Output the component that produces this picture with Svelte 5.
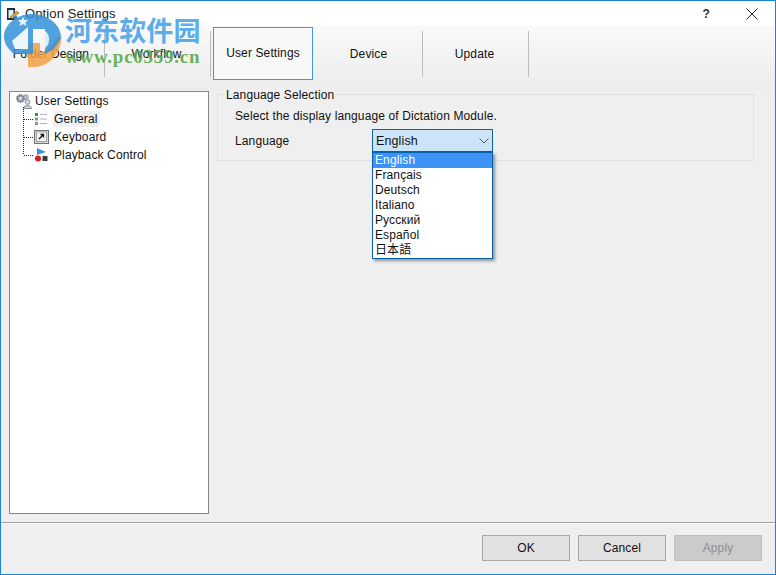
<script>
	const tabs = ['Folder Design', 'Workflow', 'User Settings', 'Device', 'Update'];
	const active = 'User Settings';
	const languages = ['English', 'Français', 'Deutsch', 'Italiano', 'Русский', 'Español', '日本語'];
</script>

<div class="window">
	<div class="titlebar">
		<svg class="app-icon" width="14" height="14" viewBox="0 0 14 14">
			<rect x="1" y="1" width="8" height="12" fill="#1d2f45" />
			<rect x="2.5" y="3" width="5" height="8" fill="#e4edf5" />
			<path d="M4 10 L11 4 L13 6 L6.5 11.5 Z" fill="#e0a030" stroke="#7a5a18" stroke-width="0.5" />
			<rect x="8" y="9" width="3" height="4" fill="#3c7fc0" />
		</svg>
		<span class="title">Option Settings</span>
		<span class="help">?</span>
		<svg class="close" width="12" height="12" viewBox="0 0 12 12">
			<path d="M0.5 0.5 L11.5 11.5 M11.5 0.5 L0.5 11.5" stroke="#222" stroke-width="1" fill="none" />
		</svg>
	</div>

	<nav class="tabbar">
		{#each tabs as tab}
			<div class="tab" class:active={tab === active}>{tab}</div>
		{/each}
	</nav>

	<main class="content">
		<aside class="tree">
			<div class="node root">
				<svg class="icon" width="18" height="16" viewBox="0 0 18 16">
					<circle cx="5.5" cy="5.5" r="3.6" fill="#9aa4ae" stroke="#6c7680" stroke-dasharray="1.6 0.8" stroke-width="1.6" />
					<circle cx="5.5" cy="5.5" r="1.2" fill="#eef0f2" />
					<circle cx="11" cy="4" r="2.4" fill="#b4bcc4" stroke="#7c868e" stroke-dasharray="1.2 0.7" />
					<circle cx="12.5" cy="9" r="2.4" fill="#d4d8de" stroke="#8a929a" />
					<path d="M8.5 15.5 C8.5 11.5 16.5 11.5 16.5 15.5 Z" fill="#c8ced6" stroke="#8a929a" />
				</svg>
				<span>User Settings</span>
			</div>
			<div class="children">
				<div class="node child">
					<svg class="icon" width="15" height="14" viewBox="0 0 15 14">
						<rect x="1" y="1" width="3" height="3" fill="#2aa02a" />
						<rect x="1" y="5.5" width="3" height="3" fill="#8e9296" />
						<rect x="1" y="10" width="3" height="3" fill="#8e9296" />
						<path d="M6 2.5 H13 M6 7 H13 M6 11.5 H13" stroke="#b0b4b8" stroke-width="1" />
					</svg>
					<span class="selected">General</span>
				</div>
				<div class="node child">
					<svg class="icon" width="15" height="14" viewBox="0 0 15 14">
						<rect x="0.5" y="0.5" width="14" height="13" fill="#d8d8d8" stroke="#6f7174" />
						<rect x="2.5" y="2" width="10" height="9.5" fill="#f4f4f4" stroke="#a0a0a0" />
						<path d="M5 9 L9.5 4.5 M6.5 4.5 H9.5 V7.5" stroke="#111" stroke-width="1.3" fill="none" />
					</svg>
					<span>Keyboard</span>
				</div>
				<div class="node child">
					<svg class="icon" width="15" height="14" viewBox="0 0 15 14">
						<path d="M3 0 L12 4 L3 7 Z" fill="#3c93e0" />
						<circle cx="4" cy="10.5" r="3" fill="#d81e1e" />
						<rect x="8.5" y="8" width="5" height="5" fill="#3a3a3a" />
					</svg>
					<span>Playback Control</span>
				</div>
			</div>
		</aside>

		<section class="group">
			<span class="legend">Language Selection</span>
			<p class="hint">Select the display language of Dictation Module.</p>
			<div class="field">
				<span class="field-label">Language</span>
				<div class="combo">
					<span>English</span>
					<svg width="10" height="6" viewBox="0 0 10 6">
						<path d="M0.5 0.5 L5 5 L9.5 0.5" stroke="#555" fill="none" />
					</svg>
					<ul class="dropdown">
						{#each languages as lang, i}
							<li class:highlight={i === 0}>{lang}</li>
						{/each}
					</ul>
				</div>
			</div>
		</section>
	</main>

	<footer class="footer">
		<button>OK</button>
		<button>Cancel</button>
		<button class="disabled" disabled>Apply</button>
	</footer>

	<!-- site watermark stamped over the screenshot -->
	<div class="watermark">
		<svg class="wm-logo" width="58" height="54" viewBox="0 0 58 54">
			<path d="M24 30 H36 V40 C42 38 48 33 52 24 L57.5 24 C57 40 46 53 31 54 H24 Z" fill="#f2a044" opacity="0.85" />
			<path d="M28 1 C44 1 57 12 57 24 C55 32 48 38 41 41 L41 16 L29 16 L29 41 L10 41 C4 36 0 30 0 24 C0 11 13 1 28 1 Z" fill="#3393da" opacity="0.85" />
			<path d="M8 28 L24 14 L24 36 L11 36 Z" fill="#fff" opacity="0.9" />
			<path d="M29 16 H34 C44 16 47 24 44 32 L41 35 V18 H29 Z" fill="#fff" opacity="0.8" />
			<path d="M19 4 L20.5 7 L24 7 L21.5 9.5 L22.5 13 L19 11 L15.5 13 L16.5 9.5 L14 7 L17.5 7 Z" fill="#e4f2fc" />
		</svg>
		<span class="wm-cn">河东软件园</span>
		<span class="wm-url">www.pc0359.cn</span>
	</div>
</div>

<style>
	:global(body) {
		margin: 0;
		background: #efefef;
	}

	.window {
		position: relative;
		box-sizing: border-box;
		width: 776px;
		height: 575px;
		border: 1px solid #1883d7;
		background: #efefef;
		display: flex;
		flex-direction: column;
		overflow: hidden;
		font-family: "Liberation Sans", Arial, sans-serif;
		font-size: 12px;
		letter-spacing: 0.12px;
		color: #111;
	}

	.titlebar {
		height: 25px;
		flex: none;
		background: #fff;
		display: flex;
		align-items: center;
		padding-left: 5px;
	}

	.app-icon {
		margin-right: 5px;
	}

	.title {
		font-size: 13px;
		color: #222;
		flex: 1;
	}

	.help {
		font-weight: bold;
		font-size: 12px;
		margin-right: 36px;
		color: #333;
	}

	.close {
		margin-right: 17px;
	}

	.tabbar {
		height: 64px;
		flex: none;
		display: flex;
		align-items: flex-start;
		background: linear-gradient(#f9f9f9, #ececec);
	}

	.tab {
		width: 106px;
		height: 46px;
		line-height: 46px;
		margin-top: 5px;
		padding-right: 2px;
		text-align: center;
		box-sizing: border-box;
		border-right: 1px solid #bdbdbd;
		white-space: nowrap;
	}

	.tab:first-child {
		width: 104px;
		padding-right: 3px;
	}

	.tab.active {
		height: 53px;
		line-height: 51px;
		width: 100px;
		margin: 1px 4px 0 2px;
		padding-right: 0;
		border: 1px solid #3f96ea;
		background: #f8f8f8;
	}

	.content {
		flex: 1;
		display: flex;
		align-items: flex-start;
		padding: 1px 21px 8px 8px;
		gap: 8px;
		min-height: 0;
		border-bottom: 1px solid #a0a0a0;
		box-shadow: 0 1px 0 #fff;
		margin-bottom: 8px;
	}

	.tree {
		width: 200px;
		height: 100%;
		flex: none;
		box-sizing: border-box;
		border: 1px solid #86868c;
		background: #fff;
	}

	.node {
		height: 18px;
		display: flex;
		align-items: center;
	}

	.root {
		padding-left: 5px;
		gap: 2px;
	}

	.children {
		position: relative;
		margin-left: 13px;
	}

	.children::before {
		content: "";
		position: absolute;
		left: 0;
		top: -3px;
		height: 47px;
		border-left: 1px dotted #222;
	}

	.child {
		position: relative;
		padding-left: 11px;
		gap: 5px;
	}

	.child::before {
		content: "";
		position: absolute;
		left: 1px;
		top: 9px;
		width: 9px;
		border-top: 1px dotted #222;
	}

	.selected {
		background: #f0f0f0;
		padding: 1px 2px 1px 1px;
		margin-left: -1px;
	}

	.icon {
		flex: none;
	}

	.group {
		position: relative;
		flex: 1;
		box-sizing: border-box;
		height: 67px;
		margin-top: 3px;
		padding-left: 17px;
		border: 1px solid #e0e0e0;
	}

	.legend {
		position: absolute;
		left: 6px;
		top: -7px;
		padding: 0 2px;
		height: 14px;
		line-height: 14px;
		background: #efefef;
	}

	.hint {
		margin: 14px 0 0;
		height: 15px;
		line-height: 15px;
	}

	.field {
		display: flex;
		align-items: center;
		margin-top: 5px;
	}

	.field-label {
		width: 137px;
	}

	.combo {
		position: relative;
		box-sizing: border-box;
		width: 121px;
		height: 23px;
		border: 1px solid #0a62ad;
		background: #cce4f7;
		display: flex;
		align-items: center;
		justify-content: space-between;
		padding: 0 3px;
		font-size: 12.5px;
	}

	.dropdown {
		position: absolute;
		left: -1px;
		top: 22px;
		width: 121px;
		box-sizing: border-box;
		margin: 0;
		padding: 0;
		list-style: none;
		background: #fff;
		border: 1px solid #0a62ad;
		box-shadow: 2px 2px 3px rgba(0, 0, 0, 0.4);
		z-index: 2;
		font-size: 12px;
		font-family: "Liberation Sans", "Noto Sans CJK TC", sans-serif;
	}

	.dropdown li {
		height: 15px;
		line-height: 15px;
		padding-left: 2px;
		white-space: nowrap;
	}

	.dropdown li.highlight {
		background: #3d93f5;
		color: #fff;
	}

	.footer {
		height: 43px;
		flex: none;
		box-sizing: border-box;
		display: flex;
		justify-content: flex-end;
		gap: 8px;
		padding: 4px 13px 0 0;
	}

	button {
		width: 88px;
		height: 26px;
		box-sizing: border-box;
		border: 1px solid #a9a9a9;
		background: #e1e1e1;
		font: inherit;
		letter-spacing: inherit;
		color: #111;
		padding: 0;
	}

	button.disabled {
		background: #cbcbcb;
		border-color: #bebebe;
		color: #8f8f8f;
	}

	.watermark {
		position: absolute;
		left: 3px;
		top: 12px;
		width: 205px;
		height: 58px;
		pointer-events: none;
	}

	.wm-logo {
		position: absolute;
		left: 0;
		top: 0;
	}

	.wm-cn {
		position: absolute;
		left: 61px;
		top: 0;
		font-family: "Noto Sans CJK SC", sans-serif;
		font-weight: 700;
		font-size: 27px;
		line-height: 34px;
		color: #4aa5ea;
		opacity: 0.9;
		white-space: nowrap;
	}

	.wm-url {
		position: absolute;
		left: 61px;
		top: 34px;
		font-family: "Liberation Serif", serif;
		font-weight: 700;
		font-size: 19px;
		line-height: 20px;
		letter-spacing: 0.75px;
		color: #5cab4a;
		opacity: 0.9;
		white-space: nowrap;
	}
</style>
